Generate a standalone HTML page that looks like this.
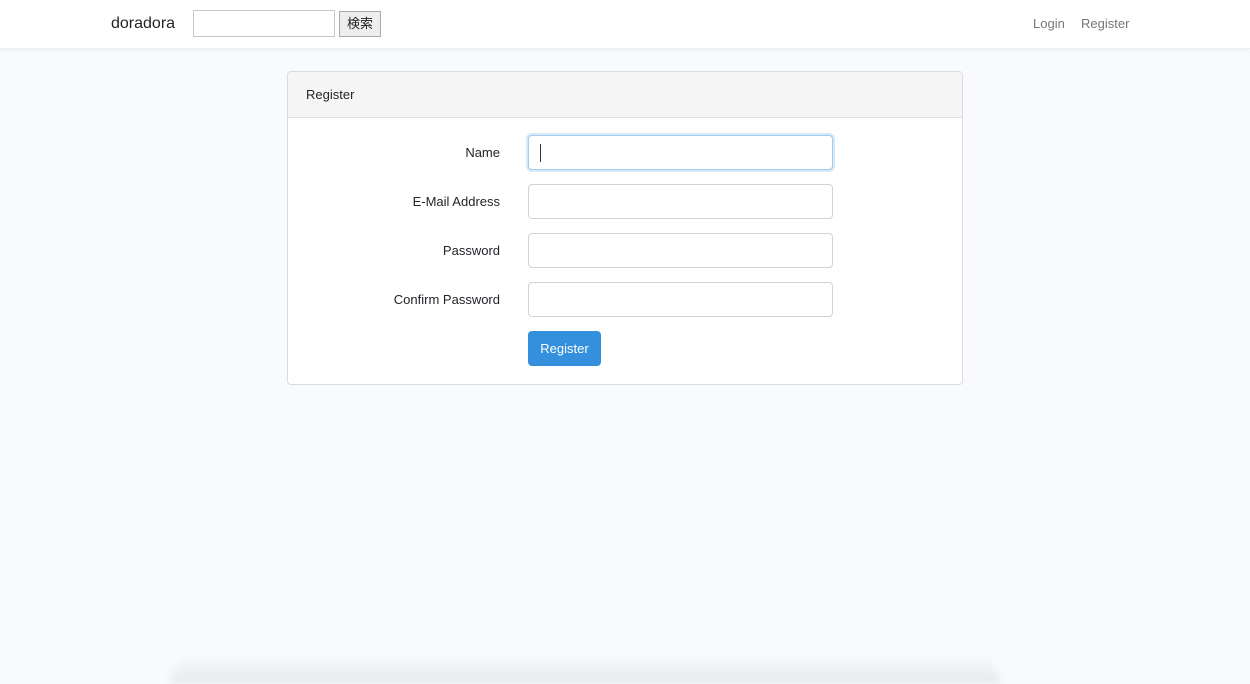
<!DOCTYPE html>
<html style="height:684px;overflow:hidden"><head><meta charset="utf-8"><style>
*{box-sizing:border-box}
body{margin:0;width:1250px;height:684px;overflow:hidden;background:#f8fafc;font-family:"Liberation Sans","Noto Sans CJK JP",sans-serif;color:#212529;font-size:13px}
.wrap{position:relative;width:1250px;height:684px;overflow:hidden}
.nav{position:absolute;left:0;top:0;width:1250px;height:49px;background:#fff;box-shadow:0 2px 4px rgba(0,0,0,.04);border-bottom:1px solid #eceff1}
.brand{position:absolute;left:111px;top:15px;font-size:16px;color:#212529}
.search{position:absolute;left:193px;top:10px;width:142px;height:27px;border:1px solid #c8c8c8;background:#fff}
.sbtn{position:absolute;left:339px;top:11px;width:42px;height:26px;border:1px solid #aaa;background:#eee;font-size:13px;text-align:center;line-height:23px;color:#222}
.nl{position:absolute;top:16px;font-size:13px;color:#777}
.card{position:absolute;left:287px;top:71px;width:676px;height:314px;background:#fff;border:1px solid #dcdcdc;border-radius:4px;overflow:hidden}
.ch{height:46px;background:#f5f5f5;border-bottom:1px solid #e0e0e0;padding:15px 18px;font-size:13px}
.lbl{position:absolute;right:462px;font-size:13px;text-align:right}
.inp{position:absolute;left:240px;width:305px;height:35px;border:1px solid #ced4da;border-radius:4px;background:#fff}
.btn{position:absolute;left:240px;top:259px;width:73px;height:35px;background:#3490dc;border-radius:4px;color:#fff;text-align:center;line-height:35px;font-size:13px}
.sh{position:absolute;left:170px;top:654px;width:830px;height:30px;background:linear-gradient(to bottom,rgba(0,0,0,0),rgba(0,0,0,.07));border-radius:30px 30px 0 0;filter:blur(4px)}
</style></head><body><div class="wrap">
<div class="nav">
<div class="brand">doradora</div>
<div class="search"></div>
<div class="sbtn">検索</div>
<div class="nl" style="left:1033px">Login</div>
<div class="nl" style="left:1081px">Register</div>
</div>
<div class="card">
<div class="ch">Register</div>
<div class="lbl" style="top:73px">Name</div>
<div class="inp" style="top:63px;border-color:#a1cbef;box-shadow:0 0 0 2px rgba(52,144,220,.2)"><div style="position:absolute;left:11px;top:8px;width:1px;height:18px;background:#333"></div></div>
<div class="lbl" style="top:122px">E-Mail Address</div>
<div class="inp" style="top:112px"></div>
<div class="lbl" style="top:171px">Password</div>
<div class="inp" style="top:161px"></div>
<div class="lbl" style="top:220px">Confirm Password</div>
<div class="inp" style="top:210px"></div>
<div class="btn">Register</div>
</div>
<div class="sh"></div>
</div></body></html>
